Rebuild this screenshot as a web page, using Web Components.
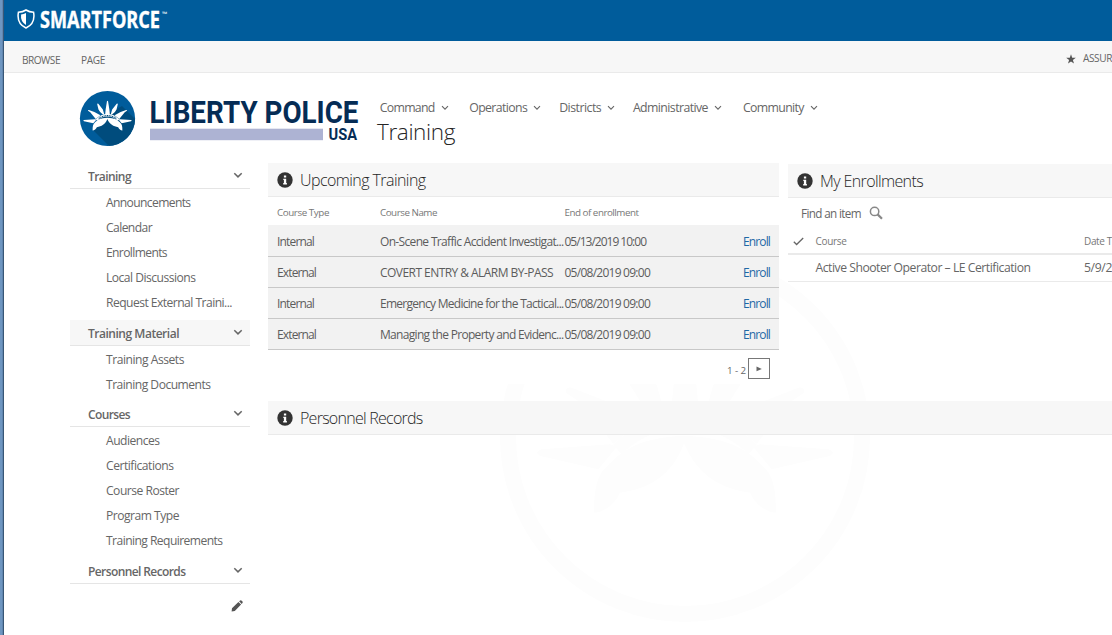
<!DOCTYPE html>
<html lang="en">
<head>
<meta charset="utf-8">
<title>Training</title>
<style>
html,body{margin:0;height:100%;overflow:hidden;background:#fff}
body{font-family:"Open Sans","Noto Sans",sans-serif;color:#666}
</style>
</head>
<body>
<training-app></training-app>
<script>
const define = (name, html, setup) => customElements.define(name, class extends HTMLElement {
  connectedCallback() {
    if (this.shadowRoot) return;
    const root = this.attachShadow({ mode: 'open' });
    root.innerHTML = typeof html === 'function' ? html(this) : html;
    if (setup) setup(this, root);
  }
});

// Single-line label that tracks its letters to fill the width in its "w" attribute.
define('fit-text', '<style>:host{display:inline-block;white-space:nowrap;flex:none}span{display:inline-block}</style><span><slot></slot></span>', (host, root) => {
  const w = +host.getAttribute('w');
  if (!w) return;
  const span = root.querySelector('span');
  host.style.width = w + 'px';
  const natural = span.getBoundingClientRect().width;
  span.style.letterSpacing = ((w - natural) / host.textContent.length) + 'px';
});

const icons = {
  down: '<svg width="8" height="6" viewBox="0 0 8 6"><path d="M1 1.2 4 4.2 7 1.2" fill="none" stroke="#666" stroke-width="1.1"/></svg>',
  bold: '<svg width="10" height="7" viewBox="0 0 10 7"><path d="M1.3 1.2 5 4.9 8.7 1.2" fill="none" stroke="#666" stroke-width="1.5"/></svg>',
  info: '<svg width="16" height="16" viewBox="0 0 16 16"><circle cx="8" cy="8" r="7.7" fill="#333"/><path d="M6.9 3.5h2.3v2.1H6.9zM6.3 6.8h2.9v4.2h.7v1.4H6.2V11h.7V8h-.6z" fill="#fff"/></svg>',
  star: '<svg width="10" height="10" viewBox="0 0 10 10"><path d="M5 .3 6.2 3.7 9.8 3.8 6.9 6 8 9.5 5 7.4 2 9.5 3.1 6 .2 3.8 3.8 3.7z" fill="#555"/></svg>',
  pencil: '<svg width="12" height="12" viewBox="0 0 12 12"><path d="M.6 11.4 1 8.2 7.4 1.9 10.1 4.6 3.8 11zM8.1 1.3 9.2.4Q9.8 0 10.4.5L11.5 1.6Q12 2.2 11.6 2.8L10.7 3.9z" fill="#555"/></svg>',
  search: '<svg width="15" height="15" viewBox="0 0 15 15"><circle cx="5.6" cy="5.4" r="4.2" fill="none" stroke="#888" stroke-width="1.5"/><path d="M8.6 8.4 13 12.8" stroke="#888" stroke-width="2.2"/></svg>',
  check: '<svg width="11" height="9" viewBox="0 0 11 9"><path d="M.8 4.8 3.6 7.5 10.2 1" fill="none" stroke="#666" stroke-width="1.3"/></svg>',
  shield: '<svg width="18" height="20" viewBox="0 0 18 20"><path d="M9 1Q12.2 3.1 16.6 3.3 18.6 14.5 9 19 -.6 14.5 1.4 3.3 5.8 3.1 9 1z" fill="none" stroke="#fff" stroke-width="1.5"/><path d="M9 4Q6.6 5.4 4.1 5.6 3.2 12.6 9 16z" fill="#fff"/></svg>'
};
define('ui-icon', el => `<style>:host{display:block;flex:none}svg{display:block}</style>${icons[el.getAttribute('name')]}`);

// Statue crown, drawn around the centre of its medallion.
const crown = `
  <path d="M-42-75-34-156-10-305Q0-330 10-305L34-156 42-75zM-78-60-135-109-165-156-188-250Q-188-272-168-262L-85-156-60-70zM78-60 135-109 165-156 188-250Q188-272 168-262L85-156 60-70zM-215 20-315-105-356-132Q-362-150-340-148L-240-109-130-50zM215 20 315-105 356-132Q362-150 340-148L240-109 130-50zM-225 22-430 37Q-457 47-430 58L-260 97-205 30zM225 22 430 37Q457 47 430 58L260 97 205 30z"/>
  <path d="M-3 19C-40 120-110 155-195 167-210 200-240 225-272 227-275 160-262 110-235 89-190 40-130 0-3-3 130 0 190 40 235 89 262 110 275 160 272 227 240 225 210 200 195 167 110 155 40 120 -3 19z"/>
  <path d="M-215 25Q-120-75 0-78 120-75 215 25L190 50Q110-25 0-27-110-25-190 50z"/>`;
define('city-logo', `
<style>:host{display:block}svg{display:block}</style>
<svg width="282" height="60" viewBox="0 0 282 60" font-family="Roboto,sans-serif" font-weight="700" fill="#052c55">
  <defs><clipPath id="c"><circle cx="28.5" cy="29.5" r="27.6"/></clipPath></defs>
  <circle cx="28.5" cy="29.5" r="27.6" fill="#005c9b"/>
  <path d="M14 41 34 61H60V34L43 17 20 30z" fill="#004c7d" clip-path="url(#c)"/>
  <g transform="translate(28.5 29) scale(.0547)" fill="#fff">${crown}<path d="M-160 8Q0-95 160 8" fill="none" stroke="#004c7d" stroke-width="22" stroke-dasharray="20 12"/></g>
  <text x="70.5" y="33.8" font-size="31.8" textLength="209" lengthAdjust="spacingAndGlyphs">LIBERTY POLICE</text>
  <rect x="71" y="39.7" width="173" height="11.5" fill="#adb3d3"/>
  <text x="249.5" y="51" font-size="16.3" textLength="28.5" lengthAdjust="spacingAndGlyphs">USA</text>
</svg>`);
define('water-mark', `
<style>:host{display:block;position:absolute;left:500px;top:252px;z-index:0}svg{display:block}</style>
<svg width="370" height="370" viewBox="-555 -555 1110 1110" fill="#fdfdfd"><circle r="531" fill="none" stroke="#fdfdfd" stroke-width="48"/>${crown}</svg>`);

define('brand-bar', `
<style>:host{display:flex;height:41px;background:#005c9b;padding-left:13px;align-items:flex-start;box-sizing:border-box}
ui-icon{margin-top:9px}svg{display:block;margin-left:5px}</style>
<ui-icon name="shield"></ui-icon>
<svg width="135" height="41" fill="#fff" font-family="'Open Sans',sans-serif"><text x="0" y="27.7" font-size="22.3" font-weight="700" stroke="#fff" stroke-width=".4" textLength="120" lengthAdjust="spacingAndGlyphs">SMARTFORCE</text><text x="122" y="16" font-size="6" font-weight="700" textLength="5.5" lengthAdjust="spacingAndGlyphs">™</text></svg>`);
define('ribbon-bar', `
<style>:host{display:flex;height:32px;box-sizing:border-box;background:#f7f7f7;border-bottom:1px solid #eaeaea;padding-left:18px;font-size:10.1px;line-height:38px;overflow:hidden;color:#666}
fit-text+fit-text{margin-left:21px}.r{display:flex;margin-left:auto;line-height:35px}ui-icon{margin:13px 7px 0 0}</style>
<fit-text w="38">BROWSE</fit-text><fit-text w="24">PAGE</fit-text>
<div class="r"><ui-icon name="star"></ui-icon><fit-text w="29">ASSUR</fit-text></div>`);
define('top-nav', `
<style>:host{display:flex;font-size:12.3px;line-height:18px;color:#666}div{display:flex;align-items:center}ui-icon{margin-left:6px}</style>
${[['Command', 55, 0], ['Operations', 58, 20.5], ['Districts', 42, 18], ['Administrative', 75, 17.7], ['Community', 61, 21]].map(([t, w, m]) => `<div style="margin-left:${m}px"><fit-text w="${w}">${t}</fit-text><ui-icon name="down"></ui-icon></div>`).join('')}`);

define('nav-group', el => `
<style>:host{display:block;margin-bottom:6px}header{display:flex;height:26px;box-sizing:border-box;border-bottom:1px solid #e5e5e5;padding:0 7px 0 18px;justify-content:space-between;font-weight:600;font-size:12px;line-height:27px;color:#666}
:host([active]) header{background:#f7f7f7}:host([active]){margin-bottom:5px}ui-icon{margin-top:9px}div{padding:2px 0 0 36px;margin-bottom:-2px}</style>
<header><fit-text w="${el.getAttribute('w')}">${el.getAttribute('label')}</fit-text><ui-icon name="bold"></ui-icon></header><div><slot></slot></div>`);
define('nav-item', el => `
<style>:host{display:block;height:25px;line-height:24px;font-size:12.1px;color:#666}</style><fit-text w="${el.getAttribute('w')}">${el.textContent}</fit-text>`);
define('side-nav', `
<style>:host{display:block;width:180px}ui-icon{margin:16px 0 0 161px}</style>
<nav-group label="Training" w="43"><nav-item w="84.5">Announcements</nav-item><nav-item w="46">Calendar</nav-item><nav-item w="61">Enrollments</nav-item><nav-item w="89.5">Local Discussions</nav-item><nav-item w="126">Request External Traini...</nav-item></nav-group>
<nav-group label="Training Material" w="91" active><nav-item w="78">Training Assets</nav-item><nav-item w="104.5">Training Documents</nav-item></nav-group>
<nav-group label="Courses" w="42"><nav-item w="53.5">Audiences</nav-item><nav-item w="67.5">Certifications</nav-item><nav-item w="73">Course Roster</nav-item><nav-item w="73">Program Type</nav-item><nav-item w="116.5">Training Requirements</nav-item></nav-group>
<nav-group label="Personnel Records" w="97.5"></nav-group>
<ui-icon name="pencil"></ui-icon>`);

define('web-part', el => `
<style>:host{display:block;position:relative}header{display:flex;height:34px;box-sizing:border-box;background:#f7f7f7;border-bottom:1px solid #eaeaea;padding-left:9px;line-height:34px;font-size:16px;font-weight:300;color:#262626}
ui-icon{margin:9px 7px 0 0}</style>
<header><ui-icon name="info"></ui-icon><fit-text w="${el.getAttribute('w')}">${el.getAttribute('label')}</fit-text></header><slot></slot>`);

const courses = [
  ['Internal', 37, 'On-Scene Traffic Accident Investigat...', 183.5, '05/13/2019 10:00', 81.5],
  ['External', 39, 'COVERT ENTRY &amp; ALARM BY-PASS', 173, '05/08/2019 09:00', 85.5],
  ['Internal', 37, 'Emergency Medicine for the Tactical...', 183.5, '05/08/2019 09:00', 85.5],
  ['External', 39, 'Managing the Property and Evidenc...', 183.5, '05/08/2019 09:00', 85.5]];
define('course-table', `
<style>:host{display:block;background:#fff;height:187px}
.row{display:grid;grid-template-columns:103px 184.5px 1fr auto;padding:0 9px;height:31px;line-height:32px;box-sizing:border-box;border-bottom:1px solid #c8c8c8;background:#f2f2f2;font-size:12px;font-weight:400;color:#5c5c5c}
.head{height:28px;line-height:31px;font-size:9.8px;background:none;border:0;color:#777}
.row.first{height:32px;line-height:33px}
.go{color:#1f68a6}
footer{display:flex;justify-content:flex-end;padding:8px 9px 0 0;font-size:9.8px;line-height:25px;color:#666}
button{all:unset;box-sizing:border-box;width:22px;height:21px;border:1px solid #777;margin-left:2px;display:grid;place-items:center}</style>
<div class="row head"><fit-text w="52">Course Type</fit-text><fit-text w="57">Course Name</fit-text><fit-text w="74">End of enrollment</fit-text></div>
${courses.map((c, i) => `<div class="row${i ? '' : ' first'}"><fit-text w="${c[1]}">${c[0]}</fit-text><fit-text w="${c[3]}">${c[2]}</fit-text><fit-text w="${c[5]}">${c[4]}</fit-text><fit-text class="go" w="27">Enroll</fit-text></div>`).join('')}
<footer><fit-text w="19">1 - 2</fit-text><button aria-label="Next"><svg width="6" height="6" viewBox="0 0 6 6"><path d="M.5 .5 5.8 3 .5 5.2z" fill="#666"/></svg></button></footer>`);
define('enrollment-list', `
<style>:host{display:block;color:#666}
.find{display:flex;height:30px;line-height:30px;font-size:11.7px;padding-left:13px}.find ui-icon{margin:8px 0 0 8px}
.row{display:grid;grid-template-columns:27.5px 268.5px 1fr;height:27px;box-sizing:border-box;border-bottom:1px solid #eaeaea;line-height:26px;font-size:12.2px;overflow:hidden}
.head{border-bottom-width:2px;line-height:27px;font-size:10px;color:#777}.head ui-icon{margin:9px 0 0 5px}</style>
<div class="find"><fit-text w="60">Find an item</fit-text><ui-icon name="search"></ui-icon></div>
<div class="row head"><ui-icon name="check"></ui-icon><fit-text w="31">Course</fit-text><fit-text w="28">Date T</fit-text></div>
<div class="row"><span></span><fit-text w="215">Active Shooter Operator – LE Certification</fit-text><fit-text w="48">5/9/2019</fit-text></div>`);

define('training-app', `
<style>:host{display:block;position:relative;height:635px;box-sizing:border-box;padding-left:4px;overflow:hidden;background:linear-gradient(90deg,#6e96c1 0 2px,#6287b0 2px 3px,#385777 3px 4px,#fff 4px)}
.top{display:flex;height:90px;padding-left:75px;box-sizing:border-box}
city-logo{margin-top:16px;width:282px}
.titles{padding:26px 0 0 18.7px}
h1{margin:1px 0 0 -2.7px;font-size:22.5px;line-height:28px;font-weight:300;color:#262626}
.body{display:grid;grid-template-columns:180px 1fr;column-gap:18px;padding-left:66px}
.parts{display:grid;grid-template-columns:511px 1fr;column-gap:9px;align-content:start;grid-template-rows:238px auto}
.parts>:nth-child(2){margin-top:1px}.wide{grid-column:1/3}
side-nav,.top{position:relative}</style>
<water-mark></water-mark>
<brand-bar></brand-bar><ribbon-bar></ribbon-bar>
<div class="top"><city-logo></city-logo><div class="titles"><top-nav></top-nav><h1><fit-text w="78">Training</fit-text></h1></div></div>
<div class="body"><side-nav></side-nav><div class="parts">
<web-part label="Upcoming Training" w="125.5"><course-table></course-table></web-part>
<web-part label="My Enrollments" w="103"><enrollment-list></enrollment-list></web-part>
<web-part class="wide" label="Personnel Records" w="122.5"></web-part>
</div></div>`);
</script>
</body>
</html>
